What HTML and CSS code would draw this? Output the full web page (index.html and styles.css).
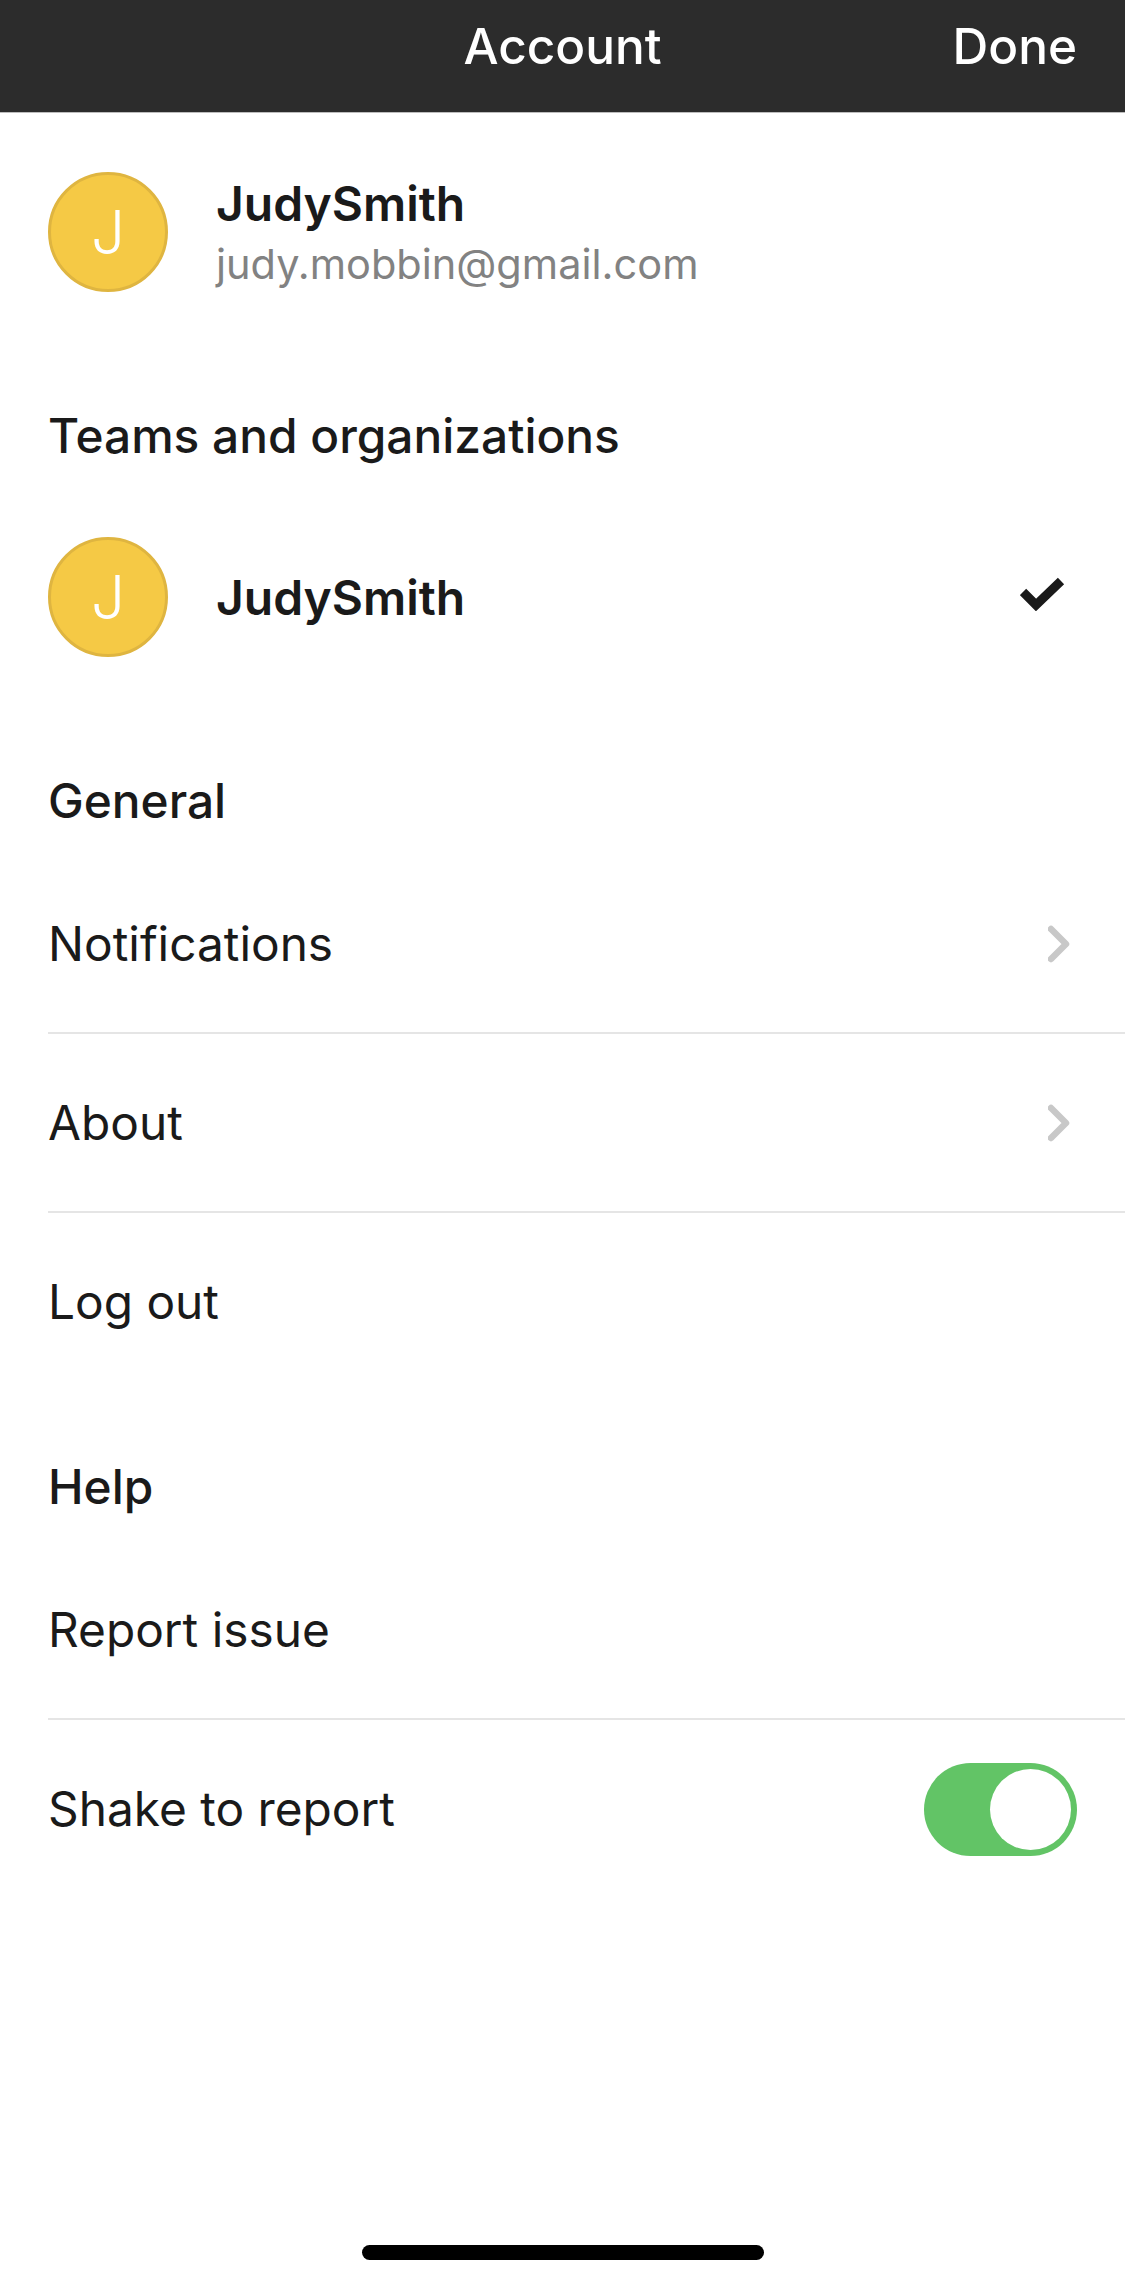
FILE: index.html
```html
<!DOCTYPE html>
<html lang="en">
<head>
    <meta charset="UTF-8">
    <meta name="viewport" content="width=device-width, initial-scale=1.0">
    <title>Account</title>
    <link rel="stylesheet" href="styles.css">
</head>
<body>
    <div class="screen">
        <header class="topbar">
            <div class="topbar-title">Account</div>
            <div class="topbar-done">Done</div>
        </header>

        <div class="profile">
            <div class="avatar">J</div>
            <div class="profile-text">
                <div class="name">JudySmith</div>
                <div class="email">judy.mobbin@gmail.com</div>
            </div>
        </div>

        <h2 class="section-title teams-title">Teams and organizations</h2>
        <div class="team">
            <div class="avatar">J</div>
            <div class="name">JudySmith</div>
            <svg class="check" width="46" height="36" viewBox="0 0 46 36">
                <path d="M3 17 L16 30 L41 6" fill="none" stroke="#1a1a1a" stroke-width="9"/>
            </svg>
        </div>

        <h2 class="section-title general-title">General</h2>
        <div class="rows">
            <div class="row">
                <span>Notifications</span>
                <svg class="chevron" width="26" height="38" viewBox="0 0 26 38">
                    <path d="M3 4 L18 19 L3 34" fill="none" stroke="#c8c8c8" stroke-width="6.5" stroke-linecap="round" stroke-linejoin="round"/>
                </svg>
            </div>
            <div class="row">
                <span>About</span>
                <svg class="chevron" width="26" height="38" viewBox="0 0 26 38">
                    <path d="M3 4 L18 19 L3 34" fill="none" stroke="#c8c8c8" stroke-width="6.5" stroke-linecap="round" stroke-linejoin="round"/>
                </svg>
            </div>
            <div class="row row-last">
                <span>Log out</span>
            </div>
        </div>

        <h2 class="section-title help-title">Help</h2>
        <div class="rows">
            <div class="row">
                <span>Report issue</span>
            </div>
            <div class="row row-last">
                <span>Shake to report</span>
                <div class="toggle"><div class="toggle-knob"></div></div>
            </div>
        </div>

        <div class="home-bar"></div>
    </div>
</body>
</html>
```

FILE: styles.css
```css
* {
    box-sizing: border-box;
}
html, body {
    margin: 0;
    padding: 0;
}
body {
    background-color: #fff;
    font-family: Inter, 'Liberation Sans', sans-serif;
    color: #1a1a1a;
}
.screen {
    width: 1125px;
    height: 2284px;
    position: relative;
    overflow: hidden;
}
.topbar {
    height: 113px;
    background-color: #2c2c2c;
    border-bottom: 1px solid #bdbdbd;
    color: #fff;
    display: flex;
    justify-content: flex-end;
    padding: 17px 48px 0;
    position: relative;
    font-size: 49.5px;
    font-weight: 500;
    line-height: 58px;
}
.topbar-title {
    position: absolute;
    left: 0;
    right: 0;
    text-align: center;
}
.topbar-done {
    position: relative;
}
.profile {
    display: flex;
    align-items: center;
    gap: 48px;
    padding: 59px 48px 0;
}
.avatar {
    width: 120px;
    height: 120px;
    border-radius: 50%;
    background-color: #f5c945;
    border: 3px solid #dfb540;
    color: #fff;
    font-size: 60px;
    font-weight: 300;
    display: flex;
    align-items: center;
    justify-content: center;
    flex-shrink: 0;
}
.profile-text {
    display: flex;
    flex-direction: column;
    gap: 6px;
    padding-top: 4px;
}
.name {
    font-size: 48px;
    font-weight: 600;
    line-height: 55px;
}
.email {
    font-size: 41.5px;
    line-height: 55px;
    color: #828282;
}
.section-title {
    margin: 0 48px;
    font-size: 47.8px;
    font-weight: 500;
    line-height: 58px;
}
.teams-title {
    margin-top: 115px;
}
.team {
    display: flex;
    align-items: center;
    gap: 48px;
    padding: 72px 48px 0;
}
.check {
    margin-left: auto;
    margin-right: 11px;
    margin-top: -8px;
}
.general-title {
    margin-top: 115px;
}
.help-title {
    margin-top: 67px;
}
.rows {
    margin-left: 48px;
    margin-top: 25px;
}
.row {
    height: 179px;
    display: flex;
    align-items: center;
    justify-content: space-between;
    padding-right: 48px;
    border-bottom: 2px solid #e5e5e5;
    font-size: 47.8px;
    line-height: 58px;
}
.row-last {
    height: 178px;
    border-bottom: none;
}
.chevron {
    margin-right: 3px;
}
.toggle {
    width: 153px;
    height: 93px;
    border-radius: 47px;
    background-color: #62c466;
    padding: 6px;
    display: flex;
    justify-content: flex-end;
}
.toggle-knob {
    width: 81px;
    height: 81px;
    border-radius: 50%;
    background-color: #fff;
}
.home-bar {
    position: absolute;
    left: 362px;
    top: 2245px;
    width: 402px;
    height: 15px;
    border-radius: 8px;
    background-color: #000;
}
```
